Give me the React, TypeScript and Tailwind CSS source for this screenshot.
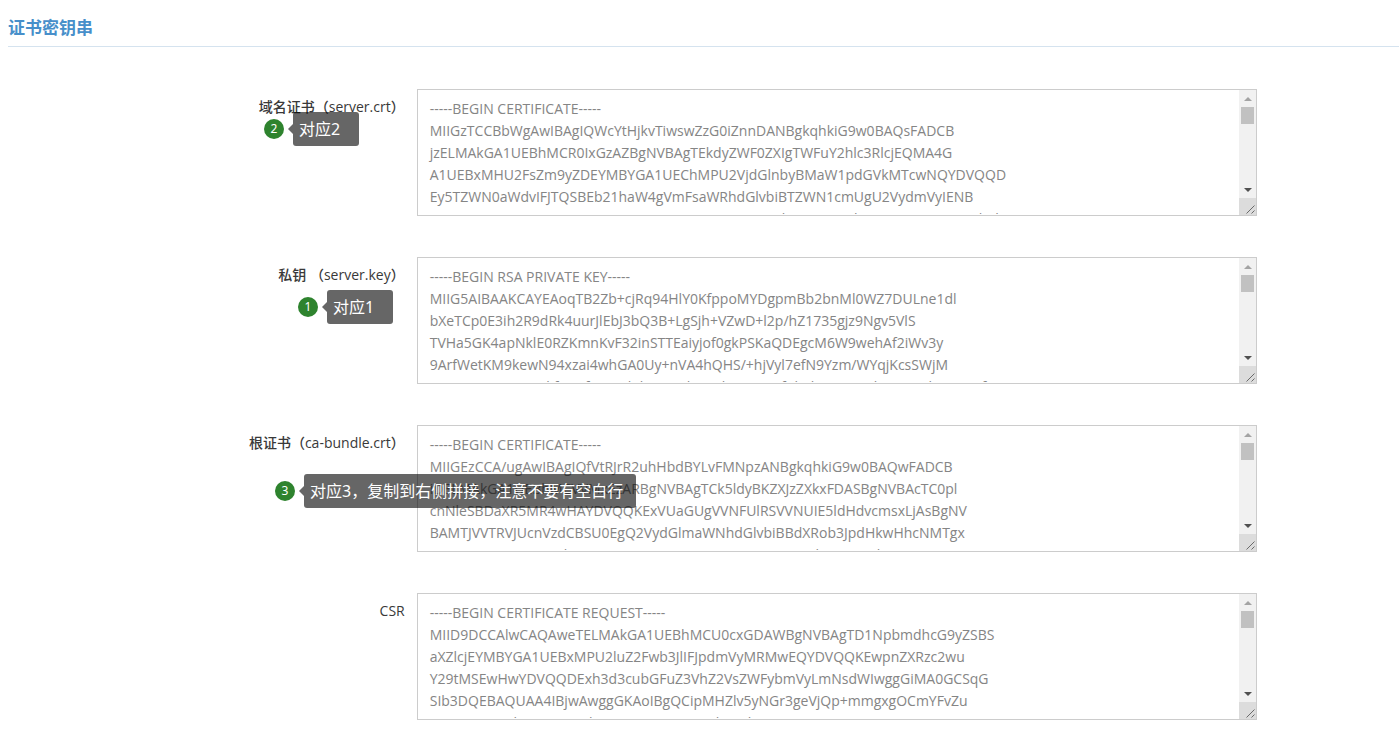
import React, { useRef } from "react";

type Note = { step: number; text: string; place: string; pad: string };
type Field = { id: string; label: string; value: string; note?: Note };

const fields: Field[] = [
  {
    id: "server-crt",
    label: "域名证书（server.crt）",
    value: `-----BEGIN CERTIFICATE-----
MIIGzTCCBbWgAwIBAgIQWcYtHjkvTiwswZzG0iZnnDANBgkqhkiG9w0BAQsFADCB
jzELMAkGA1UEBhMCR0IxGzAZBgNVBAgTEkdyZWF0ZXIgTWFuY2hlc3RlcjEQMA4G
A1UEBxMHU2FsZm9yZDEYMBYGA1UEChMPU2VjdGlnbyBMaW1pdGVkMTcwNQYDVQQD
Ey5TZWN0aWdvIFJTQSBEb21haW4gVmFsaWRhdGlvbiBTZWN1cmUgU2VydmVyIENB
MB4XDTIwMDUyMDAwMDAwMFoXDTIxMDUyMDIzNTk1OVowIzEhMB8GA1UEAxMYd3d3`,
    note: { step: 2, text: "对应2", place: "left-[264px] top-[23px]", pad: "pr-[19px]" },
  },
  {
    id: "server-key",
    label: "私钥 （server.key）",
    value: `-----BEGIN RSA PRIVATE KEY-----
MIIG5AIBAAKCAYEAoqTB2Zb+cjRq94HlY0KfppoMYDgpmBb2bnMl0WZ7DULne1dl
bXeTCp0E3ih2R9dRk4uurJlEbJ3bQ3B+LgSjh+VZwD+l2p/hZ1735gjz9Ngv5VlS
TVHa5GK4apNklE0RZKmnKvF32inSTTEaiyjof0gkPSKaQDEgcM6W9wehAf2iWv3y
9ArfWetKM9kewN94xzai4whGA0Uy+nVA4hQHS/+hjVyl7efN9Yzm/WYqjKcsSWjM
AQVUGNSEWMZRkfGoSf7CAEdPbNMUdXsEAhGQCVMfRhEkNAVQAZhGQASRbNDWQfOA`,
    note: { step: 1, text: "对应1", place: "left-[298px] top-[33px]", pad: "pr-[19px]" },
  },
  {
    id: "ca-bundle-crt",
    label: "根证书（ca-bundle.crt）",
    value: `-----BEGIN CERTIFICATE-----
MIIGEzCCA/ugAwIBAgIQfVtRJrR2uhHbdBYLvFMNpzANBgkqhkiG9w0BAQwFADCB
iDELMAkGA1UEBhMCVVMxEzARBgNVBAgTCk5ldyBKZXJzZXkxFDASBgNVBAcTC0pl
cnNleSBDaXR5MR4wHAYDVQQKExVUaGUgVVNFUlRSVVNUIE5ldHdvcmsxLjAsBgNV
BAMTJVVTRVJUcnVzdCBSU0EgQ2VydGlmaWNhdGlvbiBBdXRob3JpdHkwHhcNMTgx
MTAyMDAwMDAwWhcNMzAxMjMxMjM1OTU5WjCBjzELMAkGA1UEBhMCR0IxGzAZBgNV`,
    note: {
      step: 3,
      text: "对应3，复制到右侧拼接，注意不要有空白行",
      place: "left-[275px] top-[49px]",
      pad: "pr-[13px]",
    },
  },
  {
    id: "csr",
    label: "CSR",
    value: `-----BEGIN CERTIFICATE REQUEST-----
MIID9DCCAlwCAQAweTELMAkGA1UEBhMCU0cxGDAWBgNVBAgTD1NpbmdhcG9yZSBS
aXZlcjEYMBYGA1UEBxMPU2luZ2Fwb3JlIFJpdmVyMRMwEQYDVQQKEwpnZXRzc2wu
Y29tMSEwHwYDVQQDExh3d3cubGFuZ3VhZ2VsZWFybmVyLmNsdWIwggGiMA0GCSqG
SIb3DQEBAQUAA4IBjwAwggGKAoIBgQCipMHZlv5yNGr3geVjQp+mmgxgOCmYFvZu
QRSAVEWNXhMGSPQAVbCSEWUOAMNRVQkXEAlGSAWQDVMUEW`,
  },
];

function StepNote({ step, text, place, pad }: Note) {
  return (
    <div className={`absolute z-10 flex items-center whitespace-nowrap ${place}`}>
      <span className="mr-1 flex size-5 items-center justify-center rounded-full bg-[#2e832e] font-['Noto_Sans',sans-serif] text-[12px] leading-none text-white">
        {step}
      </span>
      <svg className="h-[10px] w-[5px]" viewBox="0 0 5 10" aria-hidden="true">
        <path d="M5 0v10L0 5z" fill="#000" fillOpacity="0.6" />
      </svg>
      <span
        className={`rounded-[3px] bg-black/60 py-[5px] pl-[6px] font-['Noto_Sans','Noto_Sans_CJK_SC',sans-serif] text-[16px] leading-[24px] text-white ${pad}`}
      >
        {text}
      </span>
    </div>
  );
}

function KeyBox({ id, value }: { id: string; value: string }) {
  const area = useRef<HTMLTextAreaElement>(null);
  const scroll = (dy: number) => area.current?.scrollBy({ top: dy });
  return (
    <div className="flex h-[127px] border border-[#ccc] bg-white">
      <textarea
        id={id}
        ref={area}
        defaultValue={value}
        spellCheck={false}
        className="mb-px min-w-0 flex-1 resize-none overflow-y-auto whitespace-pre pt-[8px] pl-3 text-[14px] leading-[22px] text-[#858585] outline-none [scrollbar-width:none]"
      />
      <div className="flex w-[17px] flex-col bg-[#f1f1f1]">
        <button type="button" aria-label="向上滚动" onClick={() => scroll(-22)} className="flex h-[17px] items-center justify-center">
          <svg width="8" height="4" viewBox="0 0 8 4" aria-hidden="true">
            <path d="M0 4L4 0l4 4z" fill="#a3a3a3" />
          </svg>
        </button>
        <div className="mx-[2px] h-[17px] bg-[#c1c1c1]" />
        <div className="flex-1" />
        <button type="button" aria-label="向下滚动" onClick={() => scroll(22)} className="flex h-[17px] items-center justify-center">
          <svg width="8" height="4" viewBox="0 0 8 4" aria-hidden="true">
            <path d="M0 0h8L4 4z" fill="#505050" />
          </svg>
        </button>
        <svg className="size-[17px] bg-[#dcdcdc]" viewBox="0 0 17 17" aria-hidden="true">
          <path d="M7.5 15.5l8-8M12.5 15.5l3-3" stroke="#6a6a6a" strokeWidth="1" fill="none" />
        </svg>
      </div>
    </div>
  );
}

export default function App() {
  return (
    <main className="min-h-screen bg-white pt-[14px] font-['Open_Sans','Noto_Sans_CJK_SC',sans-serif]">
      <h3 className="ml-2 border-b border-[#d5e3ef] pb-[4px] text-[17px] leading-[28px] font-bold text-[#478fca]">
        证书密钥串
      </h3>
      <form className="mt-[42px] flex flex-col gap-[41px]">
        {fields.map((f) => (
          <div key={f.id} className="relative grid grid-cols-[29%_calc(60%+1px)] gap-x-[11px]">
            <label
              htmlFor={f.id}
              className="pt-[7px] pr-px text-right text-[14px] leading-[22px] font-medium text-[#393939]"
            >
              {f.label}
            </label>
            <KeyBox id={f.id} value={f.value} />
            {f.note && <StepNote {...f.note} />}
          </div>
        ))}
      </form>
    </main>
  );
}
